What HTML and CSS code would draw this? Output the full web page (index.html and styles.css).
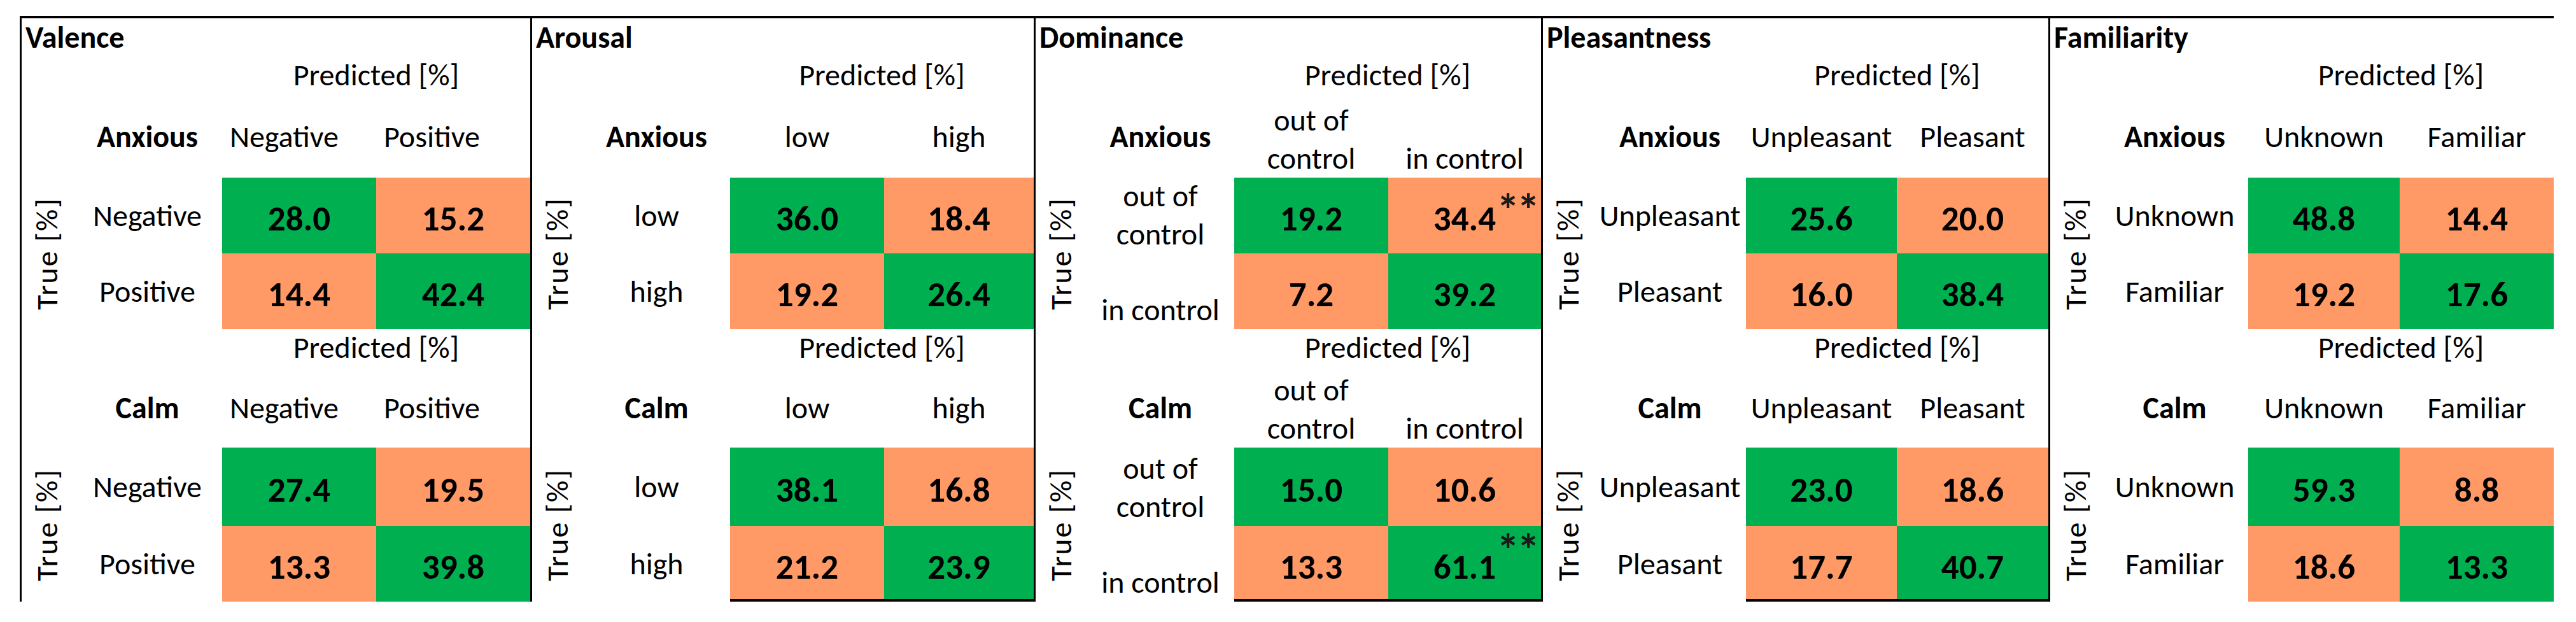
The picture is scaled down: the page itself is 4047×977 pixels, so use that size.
FILE: index.html
```html
<!DOCTYPE html>
<html lang="en">
<head>
<meta charset="utf-8">
<title>Confusion matrices</title>
<link rel="stylesheet" href="styles.css">
</head>
<body>
<main class="sheet">

  <section class="panel panel--valence">
    <h2 class="panel__title">Valence</h2>
    <div class="matrix matrix--top">
      <div class="pred">Predicted [%]</div>
      <div class="group">Anxious</div>
      <div class="colhdr colhdr--left">Negative</div>
      <div class="colhdr colhdr--left">Positive</div>
      <div class="truelbl">True [%]</div>
      <div class="rowlbl">Negative</div>
      <div class="cell cell--hit">28.0</div>
      <div class="cell cell--miss">15.2</div>
      <div class="rowlbl">Positive</div>
      <div class="cell cell--miss">14.4</div>
      <div class="cell cell--hit">42.4</div>
    </div>
    <div class="matrix matrix--bottom">
      <div class="pred">Predicted [%]</div>
      <div class="group">Calm</div>
      <div class="colhdr colhdr--left">Negative</div>
      <div class="colhdr colhdr--left">Positive</div>
      <div class="truelbl">True [%]</div>
      <div class="rowlbl">Negative</div>
      <div class="cell cell--hit">27.4</div>
      <div class="cell cell--miss">19.5</div>
      <div class="rowlbl">Positive</div>
      <div class="cell cell--miss">13.3</div>
      <div class="cell cell--hit">39.8</div>
    </div>
  </section>

  <section class="panel panel--arousal panel--ruled">
    <h2 class="panel__title">Arousal</h2>
    <div class="matrix matrix--top">
      <div class="pred">Predicted [%]</div>
      <div class="group">Anxious</div>
      <div class="colhdr">low</div>
      <div class="colhdr">high</div>
      <div class="truelbl">True [%]</div>
      <div class="rowlbl">low</div>
      <div class="cell cell--hit">36.0</div>
      <div class="cell cell--miss">18.4</div>
      <div class="rowlbl">high</div>
      <div class="cell cell--miss">19.2</div>
      <div class="cell cell--hit">26.4</div>
    </div>
    <div class="matrix matrix--bottom">
      <div class="pred">Predicted [%]</div>
      <div class="group">Calm</div>
      <div class="colhdr">low</div>
      <div class="colhdr">high</div>
      <div class="truelbl">True [%]</div>
      <div class="rowlbl">low</div>
      <div class="cell cell--hit">38.1</div>
      <div class="cell cell--miss">16.8</div>
      <div class="rowlbl">high</div>
      <div class="cell cell--miss">21.2</div>
      <div class="cell cell--hit">23.9</div>
    </div>
  </section>

  <section class="panel panel--dominance panel--ruled">
    <h2 class="panel__title">Dominance</h2>
    <div class="matrix matrix--top">
      <div class="pred">Predicted [%]</div>
      <div class="group">Anxious</div>
      <div class="colhdr colhdr--wrap">out of<br>control</div>
      <div class="colhdr colhdr--wrap">in control</div>
      <div class="truelbl">True [%]</div>
      <div class="rowlbl rowlbl--wrap">out of<br>control</div>
      <div class="cell cell--hit">19.2</div>
      <div class="cell cell--miss">34.4<span class="star">**</span></div>
      <div class="rowlbl rowlbl--wrap">in control</div>
      <div class="cell cell--miss">7.2</div>
      <div class="cell cell--hit">39.2</div>
    </div>
    <div class="matrix matrix--bottom">
      <div class="pred">Predicted [%]</div>
      <div class="group">Calm</div>
      <div class="colhdr colhdr--wrap">out of<br>control</div>
      <div class="colhdr colhdr--wrap">in control</div>
      <div class="truelbl">True [%]</div>
      <div class="rowlbl rowlbl--wrap">out of<br>control</div>
      <div class="cell cell--hit">15.0</div>
      <div class="cell cell--miss">10.6</div>
      <div class="rowlbl rowlbl--wrap">in control</div>
      <div class="cell cell--miss">13.3</div>
      <div class="cell cell--hit">61.1<span class="star star--high">**</span></div>
    </div>
  </section>

  <section class="panel panel--pleasantness panel--ruled">
    <h2 class="panel__title">Pleasantness</h2>
    <div class="matrix matrix--top">
      <div class="pred">Predicted [%]</div>
      <div class="group">Anxious</div>
      <div class="colhdr">Unpleasant</div>
      <div class="colhdr">Pleasant</div>
      <div class="truelbl">True [%]</div>
      <div class="rowlbl">Unpleasant</div>
      <div class="cell cell--hit">25.6</div>
      <div class="cell cell--miss">20.0</div>
      <div class="rowlbl">Pleasant</div>
      <div class="cell cell--miss">16.0</div>
      <div class="cell cell--hit">38.4</div>
    </div>
    <div class="matrix matrix--bottom">
      <div class="pred">Predicted [%]</div>
      <div class="group">Calm</div>
      <div class="colhdr">Unpleasant</div>
      <div class="colhdr">Pleasant</div>
      <div class="truelbl">True [%]</div>
      <div class="rowlbl">Unpleasant</div>
      <div class="cell cell--hit">23.0</div>
      <div class="cell cell--miss">18.6</div>
      <div class="rowlbl">Pleasant</div>
      <div class="cell cell--miss">17.7</div>
      <div class="cell cell--hit">40.7</div>
    </div>
  </section>

  <section class="panel panel--familiarity">
    <h2 class="panel__title">Familiarity</h2>
    <div class="matrix matrix--top">
      <div class="pred">Predicted [%]</div>
      <div class="group">Anxious</div>
      <div class="colhdr">Unknown</div>
      <div class="colhdr">Familiar</div>
      <div class="truelbl">True [%]</div>
      <div class="rowlbl">Unknown</div>
      <div class="cell cell--hit">48.8</div>
      <div class="cell cell--miss">14.4</div>
      <div class="rowlbl">Familiar</div>
      <div class="cell cell--miss">19.2</div>
      <div class="cell cell--hit">17.6</div>
    </div>
    <div class="matrix matrix--bottom">
      <div class="pred">Predicted [%]</div>
      <div class="group">Calm</div>
      <div class="colhdr">Unknown</div>
      <div class="colhdr">Familiar</div>
      <div class="truelbl">True [%]</div>
      <div class="rowlbl">Unknown</div>
      <div class="cell cell--hit">59.3</div>
      <div class="cell cell--miss">8.8</div>
      <div class="rowlbl">Familiar</div>
      <div class="cell cell--miss">18.6</div>
      <div class="cell cell--hit">13.3</div>
    </div>
  </section>

</main>
</body>
</html>
```

FILE: styles.css
```css
* {
  box-sizing: border-box;
}

body {
  margin: 0;
  background: #ffffff;
  color: #000000;
  font-family: Carlito, Calibri, "Liberation Sans Narrow", "Liberation Sans", Arial, sans-serif;
  font-size: 48px;
  line-height: 48px;
}

.sheet {
  display: flex;
  align-items: stretch;
  width: max-content;
  margin: 25px 0 0 31px;
  border-top: 3px solid #000;
  border-left: 3px solid #000;
  box-shadow: inset 0 1px 0 #8c8c8c;
}

.panel {
  border-right: 3px solid #000;
}

.panel:last-child {
  border-right: 0;
}

.panel--valence { width: 802px; --cw1: 242px; --cw2: 242px; }
.panel--arousal { width: 791px; --cw1: 242px; --cw2: 235px; }
.panel--dominance { width: 797px; --cw1: 242px; --cw2: 240px; }
.panel--pleasantness { width: 797px; --cw1: 237px; --cw2: 238px; }
.panel--familiarity { width: 791px; --cw1: 238px; --cw2: 242px; }

.panel__title {
  margin: 0;
  height: 57px;
  padding: 7px 0 0 6px;
  font-size: 48px;
  line-height: 48px;
  font-weight: 700;
}

.matrix {
  display: grid;
  grid-template-columns: 80px 1fr var(--cw1) var(--cw2);
}

.matrix--top {
  grid-template-rows: 65px 129px 119px 119px;
}

.matrix--bottom {
  grid-template-rows: 61px 125px 123px 119px;
}

.pred {
  grid-column: 3 / span 2;
  text-align: center;
  padding-top: 9px;
  white-space: nowrap;
}

.matrix--bottom .pred {
  padding-top: 5px;
}

.group {
  grid-column: 2;
  align-self: center;
  text-align: center;
  font-weight: 700;
}

.colhdr {
  align-self: center;
  text-align: center;
  white-space: nowrap;
}

.colhdr--left {
  text-align: left;
  padding-left: 12px;
}

.colhdr--wrap,
.rowlbl--wrap {
  align-self: end;
  line-height: 60px;
}

.truelbl {
  grid-column: 1;
  grid-row: span 2;
  justify-self: center;
  align-self: center;
  writing-mode: vertical-rl;
  transform: rotate(180deg);
  white-space: nowrap;
  letter-spacing: 2px;
}

.rowlbl {
  align-self: center;
  text-align: center;
  white-space: nowrap;
}

.rowlbl--wrap {
  align-self: end;
}

.cell {
  position: relative;
  display: flex;
  align-items: center;
  justify-content: center;
  padding-top: 10px;
  font-size: 55px;
  line-height: 55px;
  font-weight: 700;
}

.cell--hit {
  background: #00b050;
}

.cell--miss {
  background: #ff9966;
}

.panel--ruled .matrix--bottom .cell:nth-last-child(-n+2) {
  box-shadow: inset 0 -4px 0 #000;
}

.star {
  position: absolute;
  right: 6px;
  top: 16px;
  font-size: 72px;
  line-height: 72px;
  letter-spacing: -4px;
  color: #1a1a1a;
}

.star--high {
  top: 3px;
}
```
